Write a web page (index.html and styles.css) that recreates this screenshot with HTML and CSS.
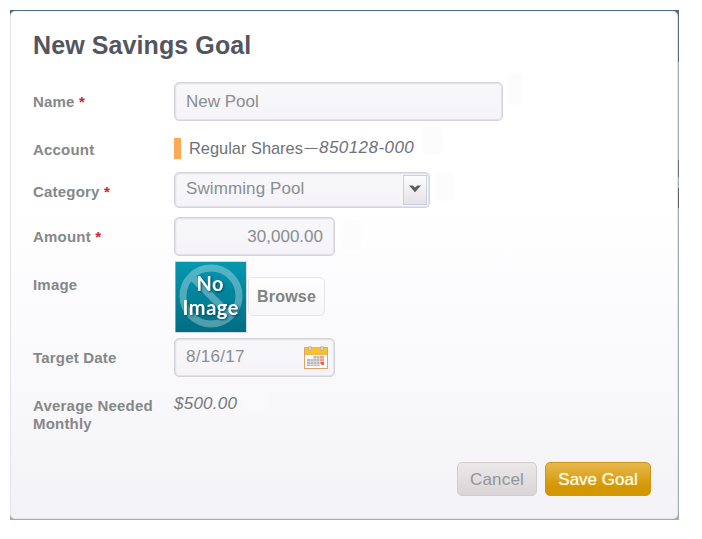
FILE: index.html
```
<!DOCTYPE html>
<html lang="en">
<head>
<meta charset="utf-8">
<title>New Savings Goal</title>
<link rel="stylesheet" href="styles.css">
</head>
<body>
<div class="backdrop">
<main class="dialog">
  <h1 class="title">New Savings Goal</h1>
  <form class="form">
    <div class="row row-name">
      <label class="label">Name <span class="req">*</span></label>
      <div class="field field-name">New Pool</div>
      <span class="hint"></span>
    </div>
    <div class="row row-account">
      <span class="label">Account</span>
      <div class="account"><span class="swatch"></span><span class="share">Regular Shares</span><span class="dash">—</span><em class="number">850128-000</em></div>
      <span class="hint"></span>
    </div>
    <div class="row row-category">
      <label class="label">Category <span class="req">*</span></label>
      <div class="field field-select"><span>Swimming Pool</span>
        <span class="drop"><svg width="14" height="8" viewBox="0 0 14 8"><path d="M1 .5h3.600L7 2.600 9.400.5H13L7 7.300z" fill="#5b5b60"/></svg></span>
      </div>
      <span class="hint"></span>
    </div>
    <div class="row row-amount">
      <label class="label">Amount <span class="req">*</span></label>
      <div class="field field-amount">30,000.00</div>
      <span class="hint"></span>
    </div>
    <div class="row row-image">
      <span class="label">Image</span>
      <svg class="thumb" width="73" height="73" viewBox="0 0 73 73">
        <defs><linearGradient id="teal" x1="0" y1="0" x2="0" y2="1"><stop offset="0" stop-color="#0598b0"/><stop offset="1" stop-color="#006d83"/></linearGradient></defs>
        <rect x="1" width="72" height="72" fill="#d3dce4"/>
        <rect x="1.500" y="1" width="70.500" height="70" fill="url(#teal)"/>
        <g fill="none" stroke="#fff" stroke-opacity=".31" stroke-width="7"><circle cx="37" cy="35" r="28"/><path d="M19.800 17.800 54.200 52.200"/></g>
        <g class="thumb-text" text-anchor="middle"><text x="36" y="30" textLength="27">No</text><text x="36.500" y="54" textLength="56">Image</text></g>
      </svg>
      <button type="button" class="browse">Browse</button>
    </div>
    <div class="row row-date">
      <label class="label">Target Date</label>
      <div class="field field-date"><span>8/16/17</span>
        <svg width="24" height="23" viewBox="0 0 24 23">
          <rect x=".5" y="1.500" width="23" height="21" fill="#fff" stroke="#dca468"/>
          <rect x="1" y="1.500" width="22" height="7" fill="#fbc126"/>
          <path d="M1 8.500h22" stroke="#e9b75b"/>
          <path d="M6 0v5M18 0v5" stroke="#b9b29a" stroke-width="3"/><path d="M6 0v4M18 0v4" stroke="#eee9d8"/>
          <path d="M9 10h7v3h-7zM3 13h13v7H3z" fill="#b9babb"/>
          <path d="M16 10h4v8h-4z" fill="#ff9a8b"/><path d="M17 16h3v3h-3z" fill="#f25d4b"/>
          <path d="M3 15.500h17M3 18.500h15M9 12.500h11M6.500 13v7M9.500 10v10M12.500 10v10M15.500 10v10" stroke="#f2eeee" stroke-width=".5"/>
        </svg>
      </div>
    </div>
    <div class="row row-average">
      <span class="label">Average Needed Monthly</span>
      <em class="average">$500.00</em>
      <span class="hint"></span>
    </div>
    <div class="actions">
      <button type="button" class="btn cancel">Cancel</button>
      <button type="button" class="btn save">Save Goal</button>
    </div>
  </form>
</main>
</div>
</body>
</html>
```
FILE: styles.css
```
* { box-sizing: border-box; }
body {
  margin: 0;
  padding: 10px;
  background: #fff;
  font: 17px/20px "Liberation Sans", Arial, sans-serif;
  color: #858889;
}
.backdrop {
  width: 669px;
  height: 510px;
  padding: 1px 1px 1px 0;
  background:
    linear-gradient(#4e6b7e, #4e6b7e) 0 0 / 100% 2px no-repeat,
    linear-gradient(#56697f 52px, #a3acae 52px 150px, #6b6f7b 150px 167px, #a3acae 167px 178px, #60636f 178px 198px, #a3acae 198px) 100% 0 / 3px 100% no-repeat,
    linear-gradient(#4e6b7e 20px, #a3acae 20px);
}
.dialog {
  height: 508px;
  padding: 21px 26px 0 22px;
  border: 1px solid #e4e5e9;
  border-top-color: #eef3f6;
  border-radius: 5px;
  background: linear-gradient(#fff 0%, #fff 38%, #fcfcfe 55%, #f7f6f9 83%, #f3f2f6 100%);
}
.title {
  margin: 0;
  height: 49px;
  font-size: 25px;
  line-height: 25px;
  letter-spacing: .1px;
  color: #53555f;
}
.form { display: flex; flex-direction: column; }
.row { display: flex; align-items: flex-start; }
.label {
  flex: none;
  width: 141px;
  padding: 11px 10px 0 0;
  font-size: 15px;
  line-height: 18px;
  font-weight: bold;
  letter-spacing: .2px;
}
.req { color: #d3202f; }
.field {
  display: flex;
  align-items: center;
  height: 39px;
  padding: 0 11px;
  border: 1px solid #d4d3dc;
  border-radius: 5px;
  background: linear-gradient(#f8f8fb, #f5f3f7);
  box-shadow: inset 0 0 0 1px #e3e2e9, inset 1px 1px 2px #e0dfe6;
  color: #8b8e90;
}
.hint { background: #fcfcfd; border-radius: 5px; }
.row-name { height: 48px; }
.field-name { width: 329px; }
.row-name .hint { width: 15px; height: 32px; margin: -9px 0 0 4px; }
.row-account { height: 42px; }
.account { display: flex; width: 240px; padding-top: 8px; white-space: nowrap; color: #6e7279; }
.swatch { flex: none; width: 7px; height: 21px; margin-right: 8px; background: #ffa956; }
.share { flex: none; width: 114px; font-size: 16.4px; }
.dash { flex: none; width: 16px; font-size: 13px; text-align: center; }
.number { letter-spacing: .45px; }
.row-account .hint { width: 21px; height: 28px; margin: -3px 0 0 8px; }
.row-category { height: 45px; }
.field-select { width: 256px; height: 36px; padding-right: 2px; justify-content: space-between; letter-spacing: .1px; }
.field-select > span:first-child { margin-top: -2px; }
.drop {
  display: flex;
  align-items: center;
  justify-content: center;
  width: 24px;
  height: 30px;
  padding-bottom: 2px;
  border: 1px solid #c9d0e3;
  background: linear-gradient(#fcfcfd, #e5e2e8);
}
.row-category .hint { width: 19px; height: 29px; margin-left: 5px; }
.row-amount { height: 44px; }
.field-amount { width: 161px; justify-content: flex-end; }
.row-amount .hint { width: 19px; height: 30px; margin: 3px 0 0 7px; }
.row-image { height: 77px; }
.row-image .label { padding-top: 15px; }
.thumb { flex: none; }
.thumb-text {
  font: bold 20px Lato, sans-serif;
  fill: #fff;
  filter: drop-shadow(1px 1px 1px #00495c);
}
.browse {
  width: 77px;
  height: 39px;
  margin: 16px 0 0 1px;
  padding: 0;
  border: 1px solid #e6e5ed;
  border-radius: 5px;
  background: linear-gradient(#fefefe, #f7f7fa);
  font: bold 16px/20px "Liberation Sans", Arial, sans-serif;
  letter-spacing: .2px;
  color: #808384;
}
.row-date { height: 48px; }
.field-date { width: 161px; padding-right: 6px; justify-content: space-between; letter-spacing: .3px; }
.field-date > span { margin-top: -1px; }
.row-average { height: 76px; }
.average { padding-top: 8px; letter-spacing: .25px; color: #75797d; }
.row-average .hint { width: 27px; height: 18px; margin: 5px 0 0 4px; background: #f9f8fb; }
.actions { display: flex; justify-content: flex-end; gap: 8px; }
.btn {
  height: 34px;
  padding: 1px 0 0;
  border-radius: 5px;
  font: 17px/20px "Liberation Sans", Arial, sans-serif;
}
.cancel {
  width: 80px;
  border: 1px solid #d2cdca;
  background: linear-gradient(#ece7e8, #d9d4d5);
  letter-spacing: .2px;
  color: #929698;
}
.save {
  width: 106px;
  border: 1px solid #cd941b;
  background: linear-gradient(#e7b74f, #d39700 75%);
  color: #fff8e3;
  text-shadow: 0 0 1px #fff1c9;
}
```
